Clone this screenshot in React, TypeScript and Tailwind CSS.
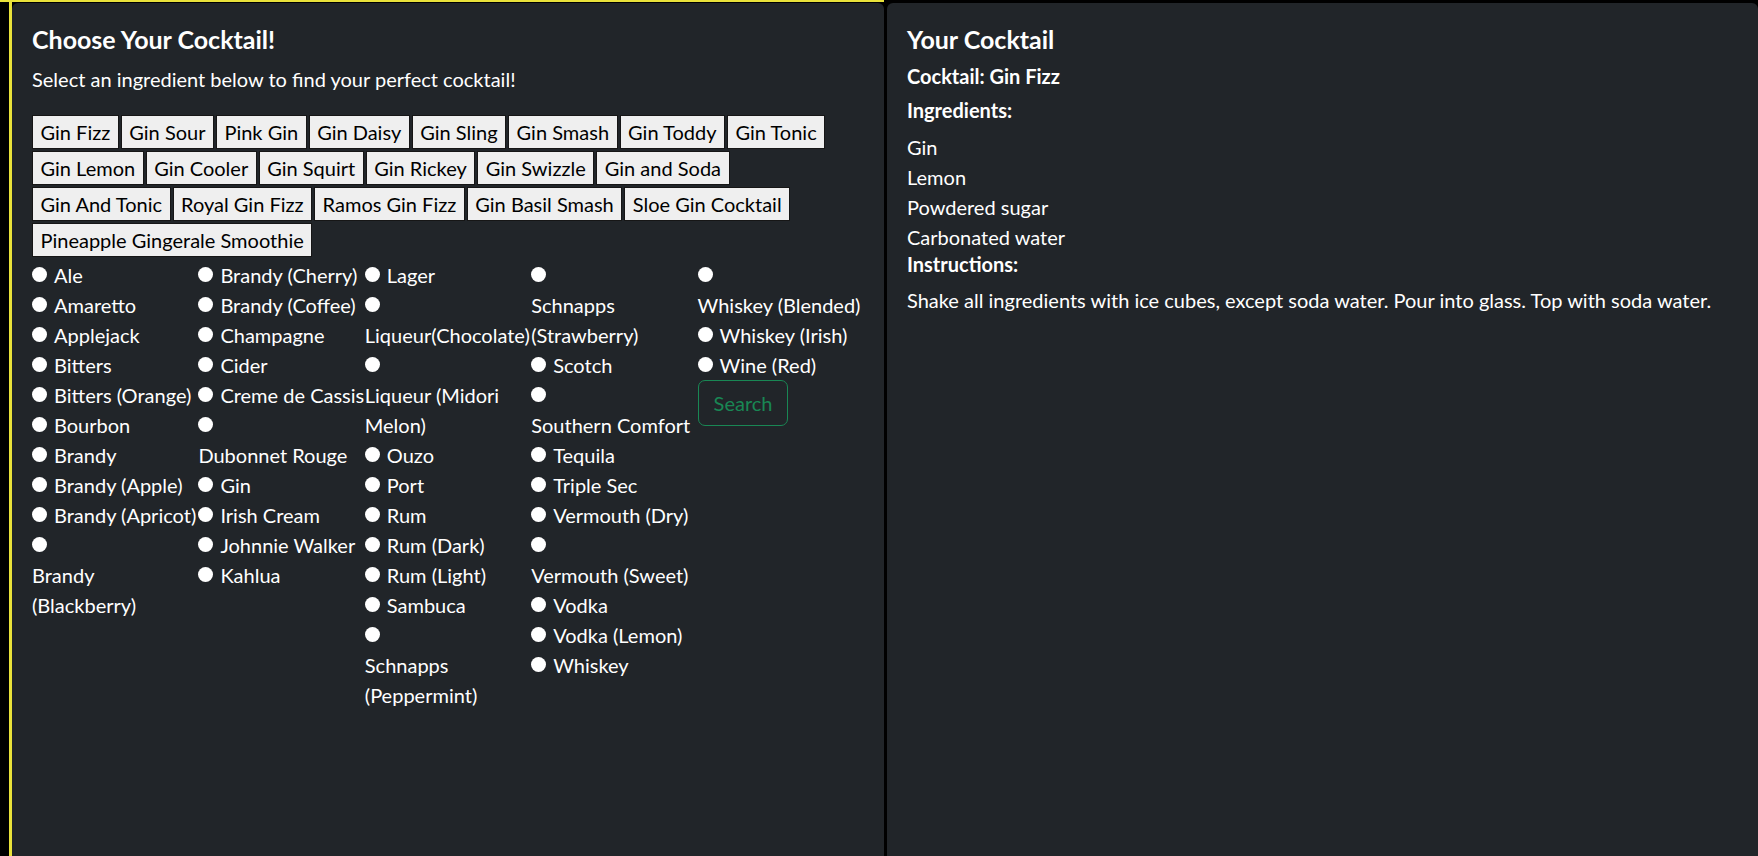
import React from "react"

const cocktails = [
  "Gin Fizz", "Gin Sour", "Pink Gin", "Gin Daisy", "Gin Sling", "Gin Smash", "Gin Toddy", "Gin Tonic",
  "Gin Lemon", "Gin Cooler", "Gin Squirt", "Gin Rickey", "Gin Swizzle", "Gin and Soda",
  "Gin And Tonic", "Royal Gin Fizz", "Ramos Gin Fizz", "Gin Basil Smash", "Sloe Gin Cocktail",
  "Pineapple Gingerale Smoothie",
]

const columns = [
  ["Ale", "Amaretto", "Applejack", "Bitters", "Bitters (Orange)", "Bourbon", "Brandy", "Brandy (Apple)", "Brandy (Apricot)", "Brandy (Blackberry)"],
  ["Brandy (Cherry)", "Brandy (Coffee)", "Champagne", "Cider", "Creme de Cassis", "Dubonnet Rouge", "Gin", "Irish Cream", "Johnnie Walker", "Kahlua"],
  ["Lager", "Liqueur(Chocolate)", "Liqueur (Midori Melon)", "Ouzo", "Port", "Rum", "Rum (Dark)", "Rum (Light)", "Sambuca", "Schnapps (Peppermint)"],
  ["Schnapps (Strawberry)", "Scotch", "Southern Comfort", "Tequila", "Triple Sec", "Vermouth (Dry)", "Vermouth (Sweet)", "Vodka", "Vodka (Lemon)", "Whiskey"],
  ["Whiskey (Blended)", "Whiskey (Irish)", "Wine (Red)"],
]

const ingredients = ["Gin", "Lemon", "Powdered sugar", "Carbonated water"]

function Ingredient({ name }: { name: string }) {
  const id = "ing-" + name.replace(/[^a-z]/gi, "")
  return (
    <div className="leading-[30px]">
      <input
        type="radio"
        name="ingredient"
        id={id}
        className="appearance-none inline-block w-[15px] h-[15px] rounded-full bg-white mr-[7px] mb-[1px] align-baseline"
      />
      <label htmlFor={id} className="inline-block">{name}</label>
    </div>
  )
}

export default function App() {
  return (
    <div className="flex min-h-screen bg-black text-white text-[20px] font-['Lato',sans-serif]">
      <div className="w-[884px] shrink-0 flex flex-col border-t-2 border-[#e9e23a] pl-[9px]">
        <div className="flex-1 flex flex-col border-l-[3px] border-[#e9e23a] pt-px bg-black">
          <div className="flex-1 rounded-tl-md rounded-tr-md bg-[#212529] px-5 pt-[19px]">
            <h4 className="text-[25px] leading-[34px] font-bold mb-[8px]">Choose Your Cocktail!</h4>
            <p className="leading-[30px] mb-[21px]">Select an ingredient below to find your perfect cocktail!</p>

            <div className="flex flex-wrap gap-[2px] mb-[3px]">
              {cocktails.map(c => (
                <button key={c} className="h-[34px] px-[7.5px] leading-[26px] bg-[#efefef] text-black border border-[#161616]">
                  {c}
                </button>
              ))}
            </div>

            <div className="grid grid-cols-5">
              {columns.map((col, i) => (
                <div key={i} className="flex flex-col">
                  {col.map(name => <Ingredient key={name} name={name} />)}
                  {i === 4 && (
                    <div>
                      <button className="px-[15px] py-[7px] leading-[30px] rounded-[7px] border border-[#198754] text-[#198754]">
                        Search
                      </button>
                    </div>
                  )}
                </div>
              ))}
            </div>
          </div>
        </div>
      </div>

      <div className="flex-1 ml-[3px] mt-[3px] rounded-t-md bg-[#212529] px-5 pt-[19px]">
        <h4 className="text-[25px] leading-[34px] font-bold mb-[8px]">Your Cocktail</h4>
        <h6 className="font-bold leading-[24px] mb-[10px]">Cocktail: Gin Fizz</h6>
        <h6 className="font-bold leading-[24px] mb-[10px]">Ingredients:</h6>
        <ul>
          {ingredients.map(i => <li key={i} className="leading-[30px]">{i}</li>)}
        </ul>
        <h6 className="font-bold leading-[24px] mb-[9px]">Instructions:</h6>
        <p className="leading-[30px]">Shake all ingredients with ice cubes, except soda water. Pour into glass. Top with soda water.</p>
      </div>
    </div>
  )
}
